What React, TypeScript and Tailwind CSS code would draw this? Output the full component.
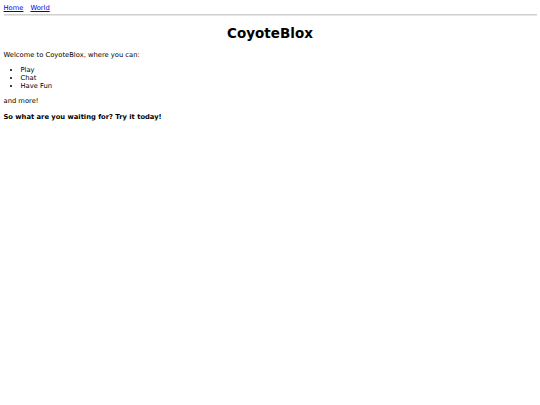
import React from "react";

const App: React.FC = () => {
  return (
    <div className="min-h-screen bg-white px-[3.5px] py-[4px] text-[6.75px] leading-[8px] text-black font-['DejaVu_Sans',sans-serif]">
      {/* Nav */}
      <nav className="flex gap-[7px] leading-[8px]">
        <a href="#" className="text-[#0000ee] underline">
          Home
        </a>
        <a href="#" className="text-[#0000ee] underline">
          World
        </a>
      </nav>
      <div className="mt-[2px] h-[2px] border-t border-[#d0d0d0] bg-[#e6e6e6]" />

      <h1 className="mt-[9px] mb-[9px] text-center text-[13.5px] leading-[17px] font-bold">
        CoyoteBlox
      </h1>

      <p className="my-[7px]">Welcome to CoyoteBlox, where you can:</p>
      <ul className="mt-[7px] mb-[7px] list-disc pl-[17px]">
        <li>Play</li>
        <li>Chat</li>
        <li>Have Fun</li>
      </ul>
      <p className="mt-[7px] mb-[8px]">and more!</p>
      <p className="mt-[8px] mb-[9px] font-bold">So what are you waiting for? Try it today!</p>
    </div>
  );
};

export default App;
